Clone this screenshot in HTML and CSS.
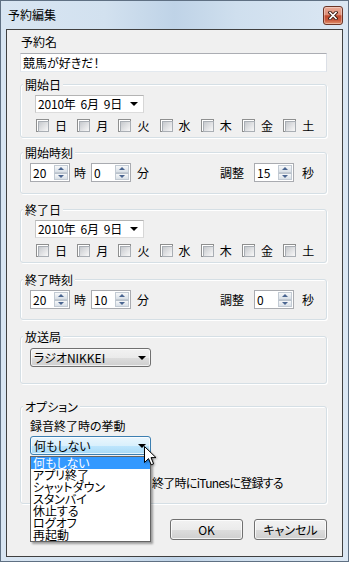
FILE: index.html
```html
<!DOCTYPE html>
<html lang="ja">
<head>
<meta charset="utf-8">
<title>予約編集</title>
<link rel="stylesheet" href="styles.css">
</head>
<body>
<div class="window">
  <div class="titlebar">
    <span class="title">予約編集</span>
    <div class="close" aria-label="閉じる">
      <svg width="10" height="9" viewBox="0 0 10 9">
        <path d="M2 1.5 L8 7.5 M8 1.5 L2 7.5" stroke="#3a1a12" stroke-width="3.4" stroke-linecap="square" fill="none"/>
        <path d="M2 1.5 L8 7.5 M8 1.5 L2 7.5" stroke="#ffffff" stroke-width="1.6" stroke-linecap="square" fill="none"/>
      </svg>
    </div>
  </div>

  <div class="client">
    <div class="field-label">予約名</div>
    <div class="textbox">競馬が好きだ！</div>

    <section class="group g-date g-start-date">
      <div class="group-title">開始日</div>
      <div class="datepicker"><span class="date-text">2010年&nbsp;&nbsp;6月&nbsp;&nbsp;9日</span><i class="arrow"></i></div>
      <div class="days">
        <label class="day"><span class="cb"></span>日</label>
        <label class="day"><span class="cb"></span>月</label>
        <label class="day"><span class="cb"></span>火</label>
        <label class="day"><span class="cb"></span>水</label>
        <label class="day"><span class="cb"></span>木</label>
        <label class="day"><span class="cb"></span>金</label>
        <label class="day"><span class="cb"></span>土</label>
      </div>
    </section>

    <section class="group g-time g-start-time">
      <div class="group-title">開始時刻</div>
      <div class="time-row">
        <div class="spin"><span class="spin-val">20</span><span class="spin-btns"><i class="up"></i><i class="down"></i></span></div>
        <span class="u u-hour">時</span>
        <div class="spin"><span class="spin-val">0</span><span class="spin-btns"><i class="up"></i><i class="down"></i></span></div>
        <span class="u u-min">分</span>
        <span class="adj">調整</span>
        <div class="spin"><span class="spin-val">15</span><span class="spin-btns"><i class="up"></i><i class="down"></i></span></div>
        <span class="u u-sec">秒</span>
      </div>
    </section>

    <section class="group g-date g-end-date">
      <div class="group-title">終了日</div>
      <div class="datepicker"><span class="date-text">2010年&nbsp;&nbsp;6月&nbsp;&nbsp;9日</span><i class="arrow"></i></div>
      <div class="days">
        <label class="day"><span class="cb"></span>日</label>
        <label class="day"><span class="cb"></span>月</label>
        <label class="day"><span class="cb"></span>火</label>
        <label class="day"><span class="cb"></span>水</label>
        <label class="day"><span class="cb"></span>木</label>
        <label class="day"><span class="cb"></span>金</label>
        <label class="day"><span class="cb"></span>土</label>
      </div>
    </section>

    <section class="group g-time g-end-time">
      <div class="group-title">終了時刻</div>
      <div class="time-row">
        <div class="spin"><span class="spin-val">20</span><span class="spin-btns"><i class="up"></i><i class="down"></i></span></div>
        <span class="u u-hour">時</span>
        <div class="spin"><span class="spin-val">10</span><span class="spin-btns"><i class="up"></i><i class="down"></i></span></div>
        <span class="u u-min">分</span>
        <span class="adj">調整</span>
        <div class="spin"><span class="spin-val">0</span><span class="spin-btns"><i class="up"></i><i class="down"></i></span></div>
        <span class="u u-sec">秒</span>
      </div>
    </section>

    <section class="group g-station">
      <div class="group-title">放送局</div>
      <div class="combo"><span>ラジオNIKKEI</span><i class="arrow"></i></div>
    </section>

    <section class="group g-option">
      <div class="group-title">オプション</div>
      <div class="opt-label">録音終了時の挙動</div>
      <div class="combo-wrap">
        <div class="combo combo-focus"><span>何もしない</span><i class="arrow"></i></div>
        <ul class="dropdown">
          <li class="selected">何もしない</li>
          <li>アプリ終了</li>
          <li>シャットダウン</li>
          <li>スタンバイ</li>
          <li>休止する</li>
          <li>ログオフ</li>
          <li>再起動</li>
        </ul>
      </div>
      <label class="check-row"><span class="cb"></span><span class="check-text">終了時にiTunesに登録する</span></label>
    </section>

    <div class="buttons">
      <div class="btn">OK</div>
      <div class="btn">キャンセル</div>
    </div>
  </div>

  <svg class="cursor" width="14" height="21" viewBox="0 0 14 21">
    <path d="M0.5 0.5 L0.5 16.5 L4.5 12.6 L7.2 18.8 L9.6 17.8 L7 11.6 L12 11.6 Z" fill="#ffffff" stroke="#000000" stroke-width="1" stroke-linejoin="miter"/>
  </svg>
</div>
</body>
</html>
```

FILE: styles.css
```css
* { box-sizing: border-box; }
html, body { margin: 0; padding: 0; }
body {
  font-family: "Noto Sans CJK JP", "Noto Sans", sans-serif;
  font-size: 12px;
  line-height: 12px;
  color: #000;
  font-feature-settings: "palt";
  background: #ffffff;
}

.window {
  position: relative;
  width: 349px;
  height: 562px;
  border: 1px solid #5f7083;
  padding: 0 5px 4px;
  display: flex;
  flex-direction: column;
  background: linear-gradient(90deg, #d8e5f2 0%, #d2e1ef 30%, #bfd3e7 50%, #cfdfee 68%, #dbe7f3 100%);
}

.titlebar {
  height: 28px;
  display: flex;
  align-items: center;
  justify-content: space-between;
  padding-left: 2px;
}

.close {
  width: 20px;
  height: 19px;
  border: 1px solid #6a3426;
  border-radius: 3px;
  display: flex;
  align-items: center;
  justify-content: center;
  background: linear-gradient(180deg, #e9ab98 0%, #dd8e78 45%, #c14a2d 52%, #c95b3e 78%, #e2956f 100%);
  box-shadow: inset 0 0 0 1px rgba(255, 255, 255, 0.35);
}

.client {
  flex: 1;
  border: 1px solid #404040;
  background: #f0f0f0;
  padding: 6px 15px 0 13px;
  display: flex;
  flex-direction: column;
  position: relative;
}

.field-label { padding-left: 1px; }

.textbox {
  margin-top: 5px;
  height: 19px;
  border: 1px solid;
  border-color: #abadb3 #dbdfe6 #e3e9ef #e2e3ea;
  background: #fff;
  padding: 0 2px;
  display: flex;
  align-items: center;
}

.group {
  border: 1px solid #d5dfe5;
  border-radius: 3px;
  box-shadow: 1px 1px 0 #ffffff, inset 1px 1px 0 #ffffff;
  display: flex;
  flex-direction: column;
  padding: 0 12px 0 9px;
}
.group-title {
  align-self: flex-start;
  margin: -6px 0 0 -7px;
  padding: 0 2px;
  background: #f0f0f0;
  line-height: 12px;
}

.g-start-date { margin-top: 12px; padding-bottom: 5px; }
.g-start-time { margin-top: 14px; padding-bottom: 11px; }
.g-end-date { margin-top: 15px; padding-bottom: 5px; }
.g-end-time { margin-top: 16px; padding-bottom: 10px; }
.g-station { margin-top: 16px; padding-bottom: 16px; }
.g-option { margin-top: 22px; padding-bottom: 14px; }

.datepicker {
  margin: 4px 0 0 5px;
  width: 109px;
  height: 18px;
  border: 1px solid;
  border-color: #b4b4b4 #d6d6d6 #dcdcdc #c8c8c8;
  background: #fff;
  display: flex;
  align-items: center;
  justify-content: space-between;
  padding: 0 5px 0 2px;
}
.date-text { letter-spacing: -0.2px; }

.arrow {
  width: 0;
  height: 0;
  border-left: 4px solid transparent;
  border-right: 4px solid transparent;
  border-top: 4px solid #000;
}

.days {
  margin: 6px 0 0 6px;
  display: flex;
  height: 13px;
  align-items: center;
}
.day {
  width: 41.2px;
  flex: none;
  display: flex;
  align-items: center;
  gap: 6px;
}

.cb {
  width: 13px;
  height: 13px;
  flex: none;
  border: 1px solid #8e8f8f;
  background: #fff;
  padding: 1px;
  display: block;
}
.cb::after {
  content: "";
  display: block;
  width: 9px;
  height: 9px;
  border: 1px solid #a9aeb4;
  background: linear-gradient(135deg, #c6c9cd 0%, #e2e3e5 55%, #f8f8f8 100%);
}

.time-row {
  margin-top: 4px;
  display: flex;
  align-items: center;
}
.spin {
  width: 40px;
  height: 19px;
  border: 1px solid #a9abb0;
  background: #fff;
  display: flex;
  padding: 1px 1px 1px 0;
}
.spin-val { flex: 1; padding-left: 2px; line-height: 15px; }
.spin-btns {
  width: 14px;
  display: flex;
  flex-direction: column;
}
.spin-btns i {
  flex: 1;
  display: flex;
  align-items: center;
  justify-content: center;
  border: 1px solid #c2cad3;
  background: linear-gradient(180deg, #f7f8f9 0%, #e4e9ee 60%, #d9e0e7 100%);
}
.spin-btns i + i { border-top-color: #b9c2cc; }
.spin-btns .up::after {
  content: "";
  border-left: 3px solid transparent;
  border-right: 3px solid transparent;
  border-bottom: 3px solid #4a6590;
}
.spin-btns .down::after {
  content: "";
  border-left: 3px solid transparent;
  border-right: 3px solid transparent;
  border-top: 3px solid #4a6590;
}

.u-hour { margin: 0 5px 0 4px; }
.u-min { margin-left: 6px; }
.adj { margin: 0 10px 0 auto; }
.u-sec { margin-left: 8px; }

.combo {
  margin-top: 5px;
  width: 121px;
  height: 19px;
  border: 1px solid #707070;
  border-radius: 3px;
  display: flex;
  align-items: center;
  justify-content: space-between;
  padding: 0 4px 0 3px;
  background: linear-gradient(180deg, #f2f2f2 0%, #ebebeb 50%, #dddddd 51%, #cfcfcf 100%);
  box-shadow: inset 0 0 0 1px rgba(255, 255, 255, 0.7);
}
.combo-wrap { position: relative; margin-top: 4px; align-self: flex-start; }
.combo-focus {
  margin-top: 0;
  border-color: #3c7fb1;
  background: linear-gradient(180deg, #eaf6fd 0%, #d9f0fc 50%, #bee6fd 51%, #a7d9f5 100%);
}

.opt-label { margin-top: 7px; }

.dropdown {
  position: absolute;
  top: 20px;
  left: 0;
  width: 121px;
  height: 86px;
  margin: 0;
  padding: 0;
  list-style: none;
  background: #fff;
  border: 1px solid #646464;
  box-shadow: 2px 2px 2px rgba(0, 0, 0, 0.35);
  z-index: 2;
}
.dropdown li {
  height: 12px;
  line-height: 12px;
  padding-left: 2px;
}
.dropdown li.selected { background: #3399ff; color: #fff; }

.check-row {
  margin-top: 21px;
  padding-left: 104px;
  display: flex;
  align-items: center;
  gap: 5px;
}
.check-text { letter-spacing: -0.7px; }

.buttons {
  margin-top: 15px;
  display: flex;
  justify-content: flex-end;
  gap: 11px;
}
.btn {
  width: 73px;
  height: 21px;
  border: 1px solid #707070;
  border-radius: 3px;
  display: flex;
  align-items: center;
  justify-content: center;
  background: linear-gradient(180deg, #f2f2f2 0%, #ebebeb 50%, #dddddd 51%, #cfcfcf 100%);
  box-shadow: inset 0 0 0 1px rgba(255, 255, 255, 0.75);
}

.cursor {
  position: absolute;
  left: 143px;
  top: 445px;
  z-index: 5;
  filter: drop-shadow(1px 1px 1px rgba(0, 0, 0, 0.3));
}
```
